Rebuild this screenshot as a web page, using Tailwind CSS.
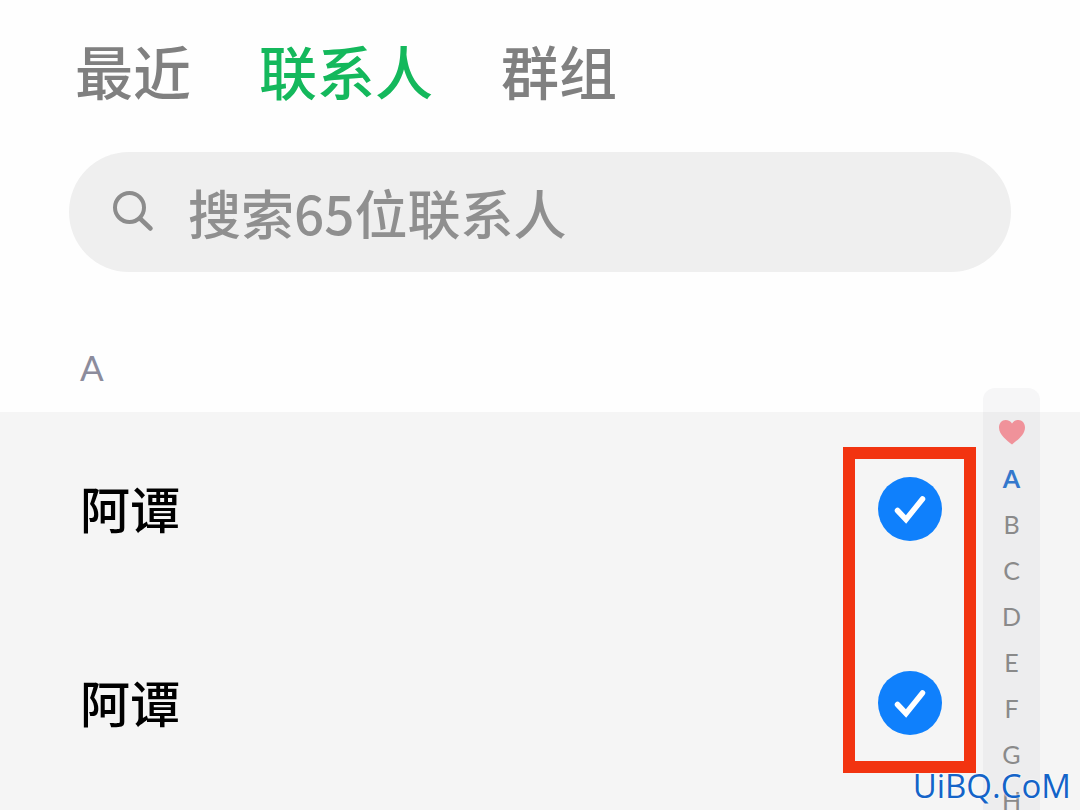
<!DOCTYPE html>
<html lang="zh-CN">
<head>
    <meta charset="UTF-8">
    <meta name="viewport" content="width=device-width, initial-scale=1.0">
    <title>联系人</title>
    <script src="https://cdn.jsdelivr.net/npm/@tailwindcss/browser@4"></script>
</head>
<body class="relative flex h-screen flex-col overflow-hidden bg-[#fefefe] font-['Noto_Sans_CJK_SC',sans-serif]">
    <header class="px-[69px] pt-7">
        <nav class="flex gap-[68px] px-[6px] text-[58px] leading-[84px] font-medium text-[#808080]">
            <a href="#recent">最近</a>
            <a href="#contacts" class="text-[#14b85c]" aria-current="page">联系人</a>
            <a href="#groups">群组</a>
        </nav>
        <label class="mt-10 flex h-[120px] items-center gap-7 rounded-full bg-[#efefef] pl-[43px] pr-10">
            <svg class="size-12 shrink-0 text-[#8c8c8c]" viewBox="0 0 48 48" fill="none" stroke="currentColor" stroke-width="4" stroke-linecap="round" aria-hidden="true">
                <circle cx="17.500" cy="19.500" r="14.500"/>
                <path d="M28 30.500 38.500 40.500" stroke-width="4.500"/>
            </svg>
            <input type="text" placeholder="搜索65位联系人" aria-label="搜索联系人" class="h-20 min-w-0 flex-1 bg-transparent text-[53px] font-medium text-[#8f8f8f] outline-none placeholder:text-[#8f8f8f]">
        </label>
    </header>

    <main class="mt-[70px]">
        <h2 class="h-[70px] px-20 font-['Lato',sans-serif] text-[35px] leading-[50px] text-[#8c8c9c]">A</h2>
        <ul class="relative bg-[#f5f5f5]">
            <li>
                <label class="flex h-[194px] items-center justify-between pl-20 pr-[138px]">
                    <span class="pb-1 text-[50px] font-medium text-black">阿谭</span>
                    <span class="relative size-16">
                        <input type="checkbox" checked class="block size-16 appearance-none rounded-full bg-[#cfcfcf] checked:bg-[#0f80fc]">
                        <svg class="pointer-events-none absolute inset-0" viewBox="0 0 64 64" fill="none" stroke="#fff" stroke-width="5.500" stroke-linecap="round" aria-hidden="true"><path d="M19.500 33.500 28 42.500 44.500 22"/></svg>
                    </span>
                </label>
            </li>
            <li>
                <label class="flex h-[194px] items-center justify-between pl-20 pr-[138px]">
                    <span class="pb-1 text-[50px] font-medium text-black">阿谭</span>
                    <span class="relative size-16">
                        <input type="checkbox" checked class="block size-16 appearance-none rounded-full bg-[#cfcfcf] checked:bg-[#0f80fc]">
                        <svg class="pointer-events-none absolute inset-0" viewBox="0 0 64 64" fill="none" stroke="#fff" stroke-width="5.500" stroke-linecap="round" aria-hidden="true"><path d="M19.500 33.500 28 42.500 44.500 22"/></svg>
                    </span>
                </label>
            </li>
            <li class="h-20"></li>
        </ul>
    </main>

    <!-- highlight around the tick boxes -->
    <div class="pointer-events-none absolute top-[447px] right-[104px] h-[326px] w-[133px] border-12 border-[#f23410]"></div>

    <!-- letter index -->
    <nav class="absolute top-[388px] right-10 flex w-[57px] flex-col items-center rounded-t-xl bg-[#787880]/6 pt-[21px] font-['Lato',sans-serif] text-[25px] leading-[46px] text-[#8a8a8a]">
        <a href="#fav" class="flex h-[46px] items-center" aria-label="收藏">
            <svg class="h-[26px] w-7" viewBox="0 0 28 26" fill="#f0929a" aria-hidden="true"><path d="M14 25.500C9 21.500 1 16 1 8.500 1 4 4 1 7.500 1 10.500 1 12.800 2.500 14 4.500 15.200 2.500 17.500 1 20.500 1 24 1 27 4 27 8.500 27 16 19 21.500 14 25.500Z"/></svg>
        </a>
        <a href="#A" class="font-bold text-[#3478cc]">A</a>
        <a href="#B">B</a>
        <a href="#C">C</a>
        <a href="#D">D</a>
        <a href="#E">E</a>
        <a href="#F">F</a>
        <a href="#G">G</a>
        <a href="#H">H</a>
    </nav>

    <p class="absolute right-[9px] bottom-1 font-['Open_Sans',sans-serif] text-[33px] leading-10 text-[#1464c8] [text-shadow:0_0_2px_#fff,0_0_2px_#fff]">UiBQ.CoM</p>
</body>
</html>
